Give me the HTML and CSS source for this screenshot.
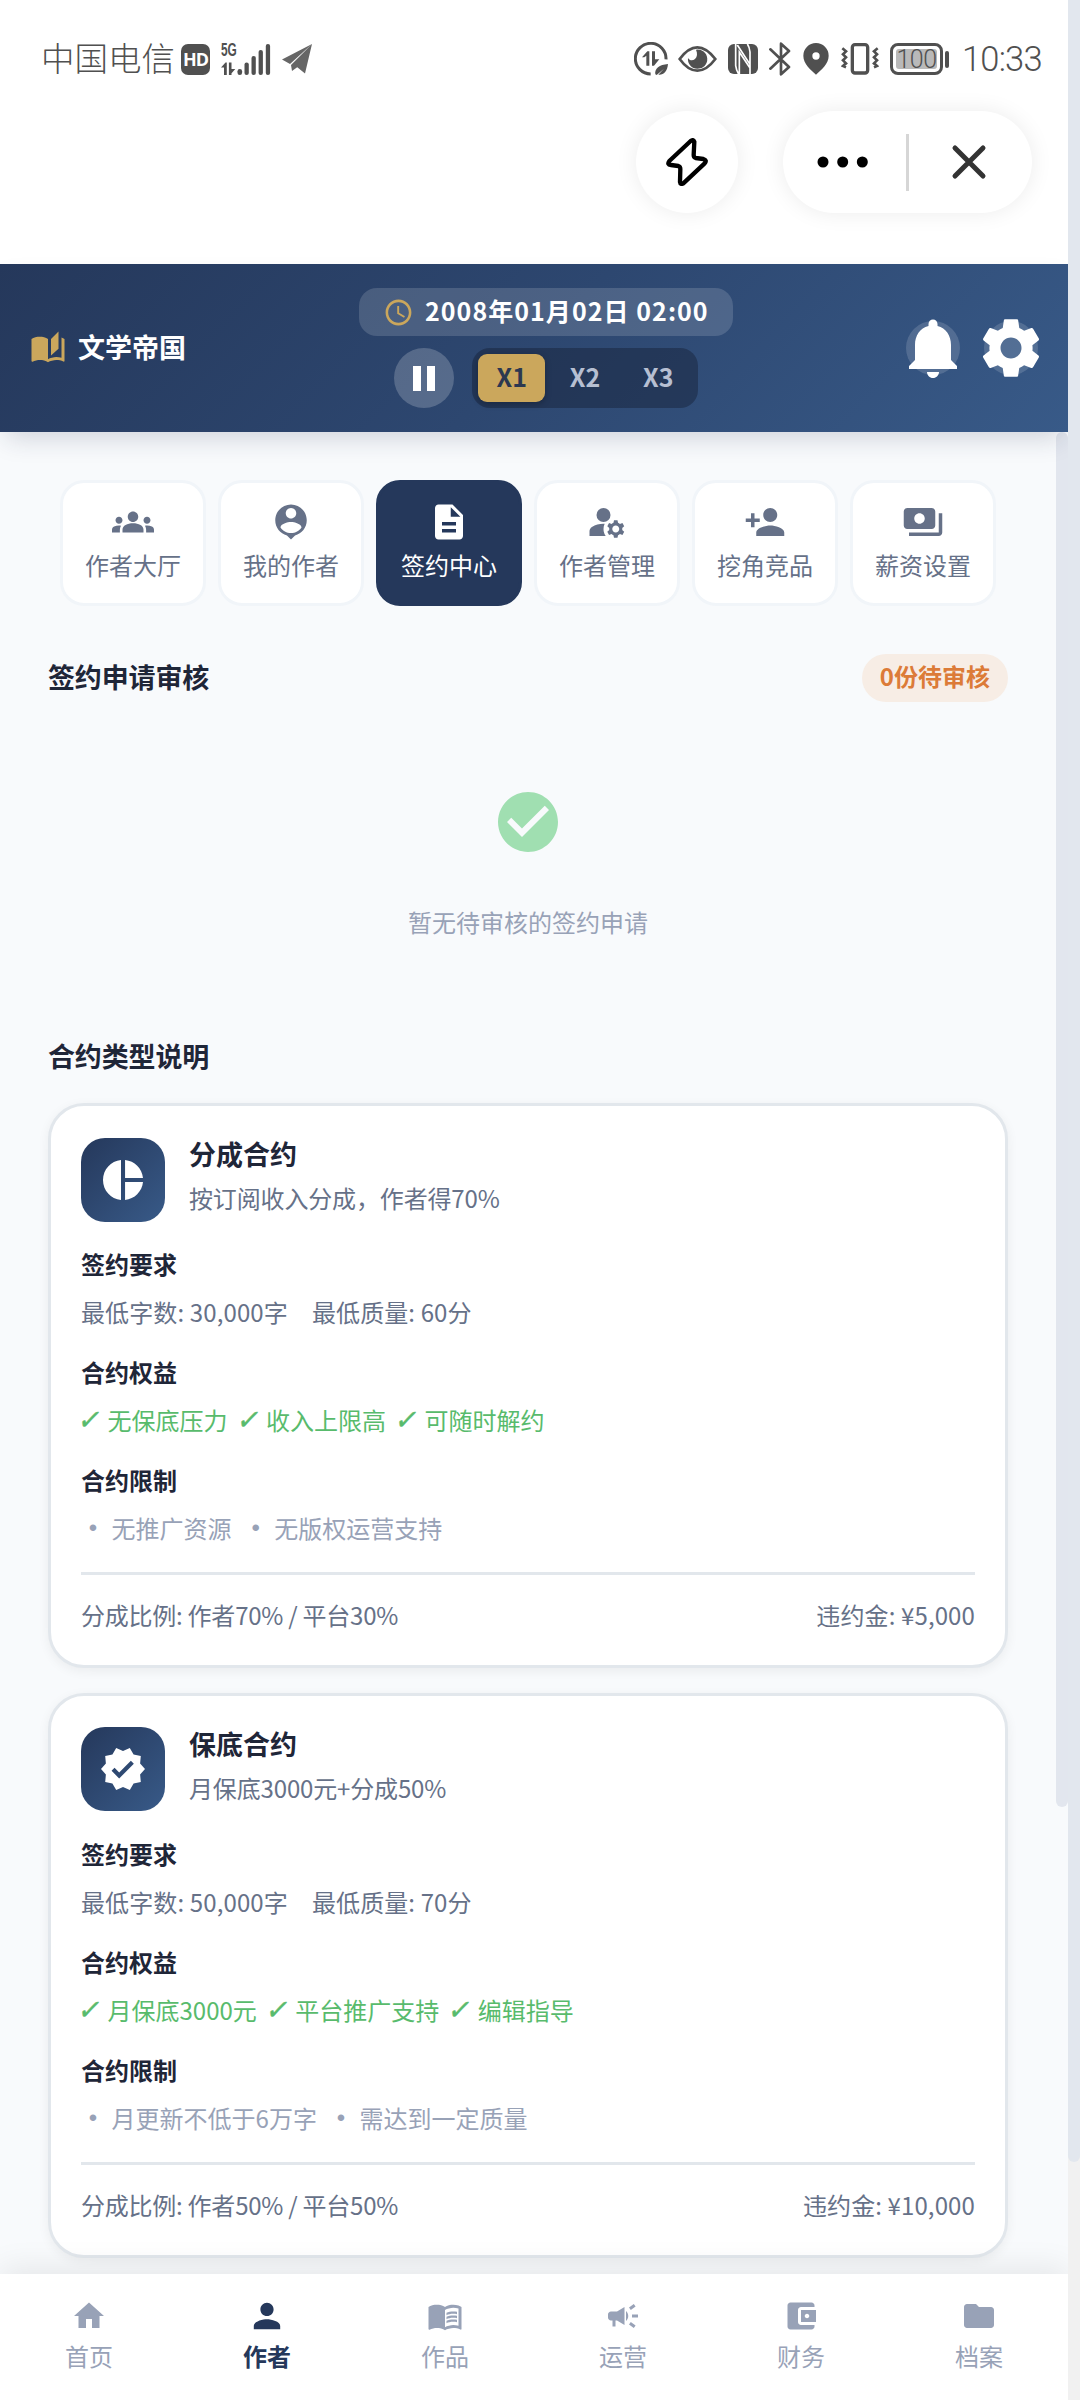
FILE: index.html
```html
<!DOCTYPE html>
<html lang="zh-CN">
<head>
<meta charset="utf-8">
<title>文学帝国</title>
<link rel="stylesheet" href="styles.css">
</head>
<body>
<div class="screen">
  <div class="app">
    <div class="status">
      <span class="carrier">中国电信</span>
      <span class="hd">HD</span>
      <span class="signal">
        <span class="net">5G</span>
        <svg width="50" height="34" viewBox="0 0 50 34"><path d="M0 25.500l4.500-5h1.300v12.500h-2.800v-7.500zM10.500 20.500v12.500h-2.600v-12.500zM9.500 27h4.800l-4.800 5.500z"/><rect x="16.500" y="27" width="4.600" height="6" rx="2.300"/><rect x="23.500" y="20.500" width="4.300" height="12.500" rx="2.100"/><rect x="30.500" y="14" width="4.300" height="19" rx="2.100"/><rect x="37.600" y="8" width="4.300" height="25" rx="2.100"/><rect x="44.800" y="2" width="4.300" height="31" rx="2.100"/></svg>
      </span>
      <svg class="plane" width="30" height="30" viewBox="0 0 30 30"><path fill="#666" d="M30 0L0 15.500l8 4.500zM30 0L9 21l1 6 5.500-4zM30 0L12.500 21l10.500 8.500z"/></svg>
      <span class="spacer"></span>
      <svg class="s-data" width="34" height="34" viewBox="0 0 102 102"><path fill="none" stroke="#505050" stroke-width="9" d="M50 96A46 46 0 1 1 96 52"/><path d="M24 46l16-18h6v43h-9V41l-6 5zM54 28h9v24h13L60 71h-6zM64 97c-3-17 12-29 38-31-2 23-14 34-29 32l17-18-22 19z"/></svg>
      <svg class="s-eye" width="39" height="26" viewBox="0 0 117 78"><path fill="none" stroke="#505050" stroke-width="8" d="M5 39Q31 4 58 4T112 39Q86 74 58 74T5 39z"/><path d="M54 11a29 29 0 1 1-24 25c5 8 14 9 21 3 7-6 8-17 3-28z"/></svg>
      <svg class="s-nfc" width="30" height="30" viewBox="0 0 90 90"><rect width="90" height="90" rx="18"/><path fill="none" stroke="#fff" stroke-width="5" d="M23 0v65q2 15 9 25M34 90V24l32 48V24M66 90V24Q64 8 58 0M28 3l38 58"/></svg>
      <svg class="s-bt" width="22" height="34" viewBox="0 0 66 102"><path fill="none" stroke="#505050" stroke-width="8" stroke-linejoin="round" stroke-linecap="round" d="M4 22l56 53-24 22V5l24 22L4 80"/></svg>
      <svg class="s-pin" width="26" height="32" viewBox="0 0 78 96"><path fill-rule="evenodd" d="M39 0a38 38 0 0 1 38 38c0 24-22 42-38 57C23 80 1 62 1 38A38 38 0 0 1 39 0zm0 28a11 11 0 1 0 0 22 11 11 0 0 0 0-22z"/></svg>
      <svg class="s-vib" width="38" height="32" viewBox="0 0 114 96"><g fill="none" stroke="#505050"><rect x="34" y="5" width="46" height="85" rx="8" stroke-width="10"/><path stroke-width="8" d="M4 16l11 9-9 9 9 9-9 9 9 9-9 8 9 4M110 16l-11 9 9 9-9 9 9 9-9 9 9 8-9 4"/></g></svg>
      <span class="battery"><span class="level">100</span></span><span class="battery-tip"></span>
      <span class="time">10:33</span>
    </div>

    <div class="capsules">
      <span class="round"><svg width="42" height="48" viewBox="0 0 126 144"><path fill="none" stroke="#000" stroke-width="13" stroke-linejoin="round" d="M74 9L10 69q-8 11 5 12l22 3q6 2 6 9l-1 39q1 9 10 4l64-60q8-9-4-13l-23-3q-6-2-6-9l2-40q-3-8-11-2z"/></svg></span>
      <span class="pill">
        <svg class="dots" width="52" height="12" viewBox="0 0 52 12"><circle cx="6" cy="6" r="5.500"/><circle cx="25.700" cy="6" r="5.500"/><circle cx="45.300" cy="6" r="5.500"/></svg>
        <span class="rule"></span>
        <svg class="close" width="36" height="36" viewBox="0 0 36 36"><path stroke="#333" stroke-width="5" stroke-linecap="round" d="M4 4l28 28M32 4L4 32"/></svg>
      </span>
    </div>

    <header class="header">
      <div class="brand">
        <svg width="36" height="36" viewBox="0 0 24 24"><path d="M19 1l-5 5v11l5-4.500V1zM1 6v14.650c0 .25.25.5.5.5.1 0 .15-.05.25-.05C3.100 20.450 5.050 20 6.500 20c1.950 0 4.050.4 5.500 1.500V6c-1.450-1.100-3.550-1.500-5.500-1.500S2.450 4.900 1 6zm22 13.500V6c-.6-.45-1.250-.75-2-1v13.500c-1.100-.35-2.300-.5-3.500-.5-1.700 0-4.150.65-5.500 1.500v2c1.350-.85 3.800-1.500 5.500-1.500 1.650 0 3.350.3 4.750 1.050.1.05.15.05.25.05.25 0 .5-.25.5-.5v-1.100z"/></svg>
        <span>文学帝国</span>
      </div>
      <div class="clock">
        <div class="date">
          <svg width="31" height="31" viewBox="0 0 24 24"><path d="M11.990 2C6.470 2 2 6.480 2 12s4.470 10 9.990 10C17.520 22 22 17.520 22 12S17.520 2 11.990 2zM12 20c-4.420 0-8-3.580-8-8s3.580-8 8-8 8 3.580 8 8-3.580 8-8 8zm.5-13H11v6l5.250 3.150.75-1.230-4.500-2.670z"/></svg>
          <span>2008年01月02日 02:00</span>
        </div>
        <div class="controls">
          <span class="pause"><i></i><i></i></span>
          <div class="speeds"><span class="on">X1</span><span>X2</span><span>X3</span></div>
        </div>
      </div>
      <div class="actions">
        <span><svg viewBox="0 0 24 24"><path d="M12 22c1.100 0 2-.9 2-2h-4c0 1.100.89 2 2 2zm6-6v-5c0-3.070-1.640-5.640-4.500-6.320V4c0-.83-.67-1.500-1.500-1.500s-1.500.67-1.500 1.500v.68C7.630 5.360 6 7.920 6 11v5l-2 2v1h16v-1l-2-2z"/></svg></span>
        <span><svg viewBox="0 0 24 24"><path d="M19.140 12.940c.04-.3.06-.61.06-.94 0-.32-.02-.64-.07-.94l2.030-1.580c.18-.14.23-.41.12-.61l-1.920-3.320c-.12-.22-.37-.29-.59-.22l-2.390.96c-.5-.38-1.030-.7-1.620-.94l-.36-2.540c-.04-.24-.24-.41-.48-.41h-3.840c-.24 0-.43.17-.47.41l-.36 2.540c-.59.24-1.130.57-1.620.94l-2.390-.96c-.22-.08-.47 0-.59.22L2.740 8.870c-.12.21-.08.47.12.61l2.030 1.580c-.05.3-.09.63-.09.94s.02.64.07.94l-2.030 1.580c-.18.14-.23.41-.12.61l1.920 3.320c.12.22.37.29.59.22l2.390-.96c.5.38 1.030.7 1.620.94l.36 2.540c.05.24.24.41.48.41h3.840c.24 0 .44-.17.47-.41l.36-2.540c.59-.24 1.130-.56 1.620-.94l2.390.96c.22.08.47 0 .59-.22l1.920-3.320c.12-.22.07-.47-.12-.61l-2.010-1.580zM12 15.500c-1.930 0-3.500-1.570-3.500-3.500s1.570-3.500 3.500-3.500 3.500 1.570 3.500 3.500-1.570 3.500-3.500 3.500z"/></svg></span>
      </div>
    </header>

    <div class="viewport">
      <main class="content">
        <nav class="tabs">
          <div class="tab"><svg viewBox="0 0 24 24"><path d="M12 12.750c1.630 0 3.070.39 4.240.9 1.080.48 1.760 1.560 1.760 2.730V18H6v-1.610c0-1.180.68-2.260 1.760-2.730 1.170-.52 2.610-.91 4.240-.91zM4 13c1.100 0 2-.9 2-2s-.9-2-2-2-2 .9-2 2 .9 2 2 2zm1.130 1.100c-.37-.06-.74-.1-1.130-.1-.99 0-1.930.21-2.780.58C.48 14.900 0 15.620 0 16.430V18h4.500v-1.610c0-.83.23-1.610.63-2.290zM20 13c1.100 0 2-.9 2-2s-.9-2-2-2-2 .9-2 2 .9 2 2 2zm4 3.430c0-.81-.48-1.530-1.220-1.850-.85-.37-1.790-.58-2.780-.58-.39 0-.76.04-1.130.1.4.68.63 1.460.63 2.290V18H24v-1.570zM12 6c1.660 0 3 1.340 3 3s-1.340 3-3 3-3-1.340-3-3 1.340-3 3-3z"/></svg><span>作者大厅</span></div>
          <div class="tab"><svg viewBox="0 0 24 24"><path d="M12 2c-4.970 0-9 4.030-9 9 0 4.170 2.840 7.670 6.690 8.690L12 22l2.310-2.310C18.160 18.670 21 15.170 21 11c0-4.970-4.030-9-9-9zm0 2c1.660 0 3 1.340 3 3s-1.340 3-3 3-3-1.340-3-3 1.340-3 3-3zm0 14.300c-2.500 0-4.710-1.280-6-3.220.03-1.990 4-3.080 6-3.080 1.990 0 5.970 1.090 6 3.080-1.290 1.940-3.500 3.220-6 3.220z"/></svg><span>我的作者</span></div>
          <div class="tab active"><svg viewBox="0 0 24 24"><path d="M14 2H6c-1.100 0-1.990.9-1.990 2L4 20c0 1.100.89 2 1.990 2H18c1.100 0 2-.9 2-2V8l-6-6zm2 16H8v-2h8v2zm0-4H8v-2h8v2zm-3-5V3.500L18.500 9H13z"/></svg><span>签约中心</span></div>
          <div class="tab"><svg viewBox="0 0 24 24"><circle cx="10" cy="8" r="4"/><path d="M10.670 13.020C10.450 13.010 10.230 13 10 13c-2.420 0-4.680.67-6.610 1.820-.88.52-1.390 1.500-1.390 2.530V20h9.260c-.79-1.130-1.260-2.510-1.260-4 0-1.070.25-2.070.67-2.980zM20.750 16c0-.22-.03-.42-.06-.63l1.140-1.010-1-1.730-1.450.49c-.32-.27-.68-.48-1.080-.63L18 11h-2l-.3 1.490c-.4.15-.76.36-1.080.63l-1.450-.49-1 1.730 1.140 1.010c-.03.21-.06.41-.06.63s.03.42.06.63l-1.140 1.010 1 1.730 1.450-.49c.32.27.68.48 1.080.63L16 21h2l.3-1.490c.4-.15.76-.36 1.080-.63l1.450.49 1-1.730-1.140-1.010c.03-.21.06-.41.06-.63zM17 18c-1.100 0-2-.9-2-2s.9-2 2-2 2 .9 2 2-.9 2-2 2z"/></svg><span>作者管理</span></div>
          <div class="tab"><svg viewBox="0 0 24 24"><path d="M15 12c2.210 0 4-1.790 4-4s-1.790-4-4-4-4 1.790-4 4 1.790 4 4 4zm-9-2V7H4v3H1v2h3v3h2v-3h3v-2H6zm9 4c-2.670 0-8 1.340-8 4v2h16v-2c0-2.660-5.330-4-8-4z"/></svg><span>挖角竞品</span></div>
          <div class="tab"><svg viewBox="0 0 24 24"><path d="M19 14V6c0-1.100-.9-2-2-2H3c-1.100 0-2 .9-2 2v8c0 1.100.9 2 2 2h14c1.100 0 2-.9 2-2zm-9-1c-1.660 0-3-1.340-3-3s1.340-3 3-3 3 1.340 3 3-1.340 3-3 3zm13-6v11c0 1.100-.9 2-2 2H4v-2h17V7h2z"/></svg><span>薪资设置</span></div>
        </nav>

        <div class="section-head"><h2>签约申请审核</h2><span class="badge">0份待审核</span></div>

        <div class="empty">
          <svg width="72" height="72" viewBox="0 0 24 24"><path d="M12 2C6.480 2 2 6.480 2 12s4.480 10 10 10 10-4.480 10-10S17.520 2 12 2zm-2 15l-5-5 1.410-1.410L10 14.170l7.590-7.590L19 8l-9 9z"/></svg>
          <p>暂无待审核的签约申请</p>
        </div>

        <h2 class="types-title">合约类型说明</h2>

        <div class="cards">
          <article class="card">
            <div class="card-head">
              <span class="card-icon"><svg width="48" height="48" viewBox="0 0 24 24"><path d="M11 2v20c-5.070-.5-9-4.790-9-10s3.930-9.500 9-10zm2.030 0v8.990H22c-.47-4.740-4.240-8.520-8.970-8.990zm0 11.010V22c4.740-.47 8.500-4.250 8.970-8.990h-8.970z"/></svg></span>
              <div><h3>分成合约</h3><p>按订阅收入分成，作者得70%</p></div>
            </div>
            <section><h4>签约要求</h4><p class="reqs"><span>最低字数: 30,000字</span><span>最低质量: 60分</span></p></section>
            <section><h4>合约权益</h4><p class="perks"><span><b>✓</b>无保底压力</span><span><b>✓</b>收入上限高</span><span><b>✓</b>可随时解约</span></p></section>
            <section><h4>合约限制</h4><p class="limits"><span><b>•</b>无推广资源</span><span><b>•</b>无版权运营支持</span></p></section>
            <div class="card-foot"><span>分成比例: 作者70% / 平台30%</span><span>违约金: ¥5,000</span></div>
          </article>
          <article class="card">
            <div class="card-head">
              <span class="card-icon"><svg width="48" height="48" viewBox="0 0 24 24"><path d="M23 12l-2.440-2.790.34-3.690-3.610-.82-1.890-3.200L12 2.960 8.600 1.500 6.710 4.690 3.100 5.500l.34 3.700L1 12l2.440 2.790-.34 3.700 3.610.82L8.600 22.500l3.400-1.470 3.400 1.460 1.890-3.190 3.610-.82-.34-3.690L23 12zm-12.910 4.720l-3.800-3.810 1.480-1.480 2.320 2.330 5.850-5.870 1.480 1.480-7.330 7.350z"/></svg></span>
              <div><h3>保底合约</h3><p>月保底3000元+分成50%</p></div>
            </div>
            <section><h4>签约要求</h4><p class="reqs"><span>最低字数: 50,000字</span><span>最低质量: 70分</span></p></section>
            <section><h4>合约权益</h4><p class="perks"><span><b>✓</b>月保底3000元</span><span><b>✓</b>平台推广支持</span><span><b>✓</b>编辑指导</span></p></section>
            <section><h4>合约限制</h4><p class="limits"><span><b>•</b>月更新不低于6万字</span><span><b>•</b>需达到一定质量</span></p></section>
            <div class="card-foot"><span>分成比例: 作者50% / 平台50%</span><span>违约金: ¥10,000</span></div>
          </article>
        </div>
      </main>
      <div class="inner-bar"><div class="thumb"></div></div>
    </div>

    <nav class="bottom">
      <div class="item"><svg viewBox="0 0 24 24"><path d="M10 20v-6h4v6h5v-8h3L12 3 2 12h3v8z"/></svg><span>首页</span></div>
      <div class="item active"><svg viewBox="0 0 24 24"><path d="M12 12c2.210 0 4-1.790 4-4s-1.790-4-4-4-4 1.790-4 4 1.790 4 4 4zm0 2c-2.670 0-8 1.340-8 4v2h16v-2c0-2.660-5.330-4-8-4z"/></svg><span>作者</span></div>
      <div class="item"><svg viewBox="0 0 24 24"><path d="M21 5c-1.110-.35-2.330-.5-3.500-.5-1.950 0-4.050.4-5.500 1.500-1.450-1.100-3.550-1.500-5.500-1.500S2.450 4.900 1 6v14.650c0 .25.25.5.5.5.1 0 .15-.05.25-.05C3.100 20.450 5.050 20 6.500 20c1.950 0 4.050.4 5.500 1.500 1.350-.85 3.800-1.500 5.500-1.500 1.650 0 3.350.3 4.750 1.050.1.05.15.05.25.05.25 0 .5-.25.5-.5V6c-.6-.45-1.250-.75-2-1zm0 13.500c-1.100-.35-2.300-.5-3.500-.5-1.700 0-4.150.65-5.500 1.500V8c1.350-.85 3.800-1.500 5.500-1.500 1.200 0 2.400.15 3.500.5v11.500z"/><path d="M17.500 10.500c.88 0 1.730.09 2.500.26V9.240c-.79-.15-1.640-.24-2.500-.24-1.700 0-3.240.29-4.500.83v1.660c1.130-.64 2.700-.99 4.500-.99zM13 12.490v1.660c1.130-.64 2.700-.99 4.500-.99.88 0 1.730.09 2.500.26V11.900c-.79-.15-1.640-.24-2.500-.24-1.700 0-3.240.3-4.500.83zm4.500 1.840c-1.700 0-3.240.29-4.500.83v1.660c1.130-.64 2.700-.99 4.500-.99.88 0 1.730.09 2.500.26v-1.520c-.79-.16-1.640-.24-2.500-.24z"/></svg><span>作品</span></div>
      <div class="item"><svg viewBox="0 0 24 24"><path d="M18 11v2h4v-2h-4zm-2 6.610c.96.71 2.210 1.650 3.200 2.390.4-.53.8-1.070 1.200-1.600-.99-.74-2.240-1.680-3.200-2.400-.4.54-.8 1.080-1.200 1.610zM20.400 5.600c-.4-.53-.8-1.070-1.200-1.600-.99.74-2.240 1.680-3.200 2.400.4.53.8 1.070 1.200 1.600.96-.72 2.210-1.650 3.200-2.400zM4 9c-1.100 0-2 .9-2 2v2c0 1.100.9 2 2 2h1v4h2v-4h1l5 3V6L8 9H4zm11.500 3c0-1.330-.58-2.530-1.500-3.350v6.690c.92-.81 1.500-2.010 1.500-3.340z"/></svg><span>运营</span></div>
      <div class="item"><svg viewBox="0 0 24 24"><path d="M21 18v1c0 1.100-.9 2-2 2H5c-1.110 0-2-.9-2-2V5c0-1.100.89-2 2-2h14c1.100 0 2 .9 2 2v1h-9c-1.110 0-2 .9-2 2v8c0 1.100.89 2 2 2h9zm-9-2h10V8H12v8zm4-2.500c-.83 0-1.500-.67-1.500-1.500s.67-1.500 1.500-1.500 1.500.67 1.500 1.500-.67 1.500-1.500 1.500z"/></svg><span>财务</span></div>
      <div class="item"><svg viewBox="0 0 24 24"><path d="M10 4H4c-1.100 0-1.990.9-1.990 2L2 18c0 1.100.9 2 2 2h16c1.100 0 2-.9 2-2V8c0-1.100-.9-2-2-2h-8l-2-2z"/></svg><span>档案</span></div>
    </nav>
  </div>
  <div class="outer-bar"><div class="thumb"></div></div>
</div>
</body>
</html>
```
FILE: styles.css
```css
* { box-sizing: border-box; margin: 0; padding: 0; }
body {
  width: 1080px;
  height: 2400px;
  overflow: hidden;
  background: #fff;
  font-family: "Noto Sans CJK SC", sans-serif;
  font-size: 24px;
  line-height: 36px;
  color: #1f2638;
  white-space: nowrap;
}
svg { display: block; flex: none; fill: currentColor; }
.screen { display: flex; height: 2400px; }
.app { width: 1068px; display: flex; flex-direction: column; height: 2400px; }
.outer-bar { width: 12px; background: #f1f1f1; position: relative; z-index: 3; }
.outer-bar .thumb { height: 2162px; background: #e2e7ee; border-radius: 0 0 6px 6px; }

/* system status bar */
.status { display: flex; align-items: center; height: 111px; padding: 7px 25px 0 41px; color: #505050; }
.carrier { font-size: 33.500px; font-weight: 300; line-height: 40px; margin-top: -4px; width: 140px; }
.hd { width: 29px; height: 31px; border-radius: 7px; background: #505050; color: #fff; font: bold 18px/31px "Open Sans", sans-serif; text-align: center; letter-spacing: -1px; }
.signal { position: relative; margin-left: 11px; }
.net { position: absolute; left: 0; top: 0; font: bold 18px/16px "Liberation Sans", sans-serif; transform: scaleX(.66); transform-origin: left; }
.plane { margin-left: 11px; }
.spacer { flex: 1; }
.s-eye { margin-left: 10px; }
.s-nfc { margin-left: 11px; }
.s-bt { margin-left: 11px; }
.s-pin { margin-left: 12px; }
.s-vib { margin-left: 12px; }
.battery { margin-left: 11px; width: 53px; height: 32px; border: 3px solid #505050; border-radius: 8px; padding: 3px; }
.level { display: block; height: 20px; border-radius: 3px; background: #b9b9b9; font: 300 25px/21px Roboto, sans-serif; text-align: center; letter-spacing: -.5px; }
.battery-tip { width: 4px; height: 17px; margin-left: 2px; border-radius: 2px; background: #505050; }
.time { margin-left: 13px; width: 81px; font: 300 34.500px/40px Roboto, sans-serif; letter-spacing: -.8px; }

.capsules { display: flex; gap: 45px; height: 153px; padding-left: 636px; color: #000; }
.round, .pill { height: 102px; background: #fff; border-radius: 51px; box-shadow: 0 0 22px rgba(0, 0, 0, .08); display: flex; align-items: center; }
.round { width: 102px; justify-content: center; }
.pill { width: 249px; padding-left: 34px; }
.rule { width: 3px; height: 57px; background: #d6d6d6; margin: 0 42px 0 37px; }

/* app header */
.header { position: relative; z-index: 2; flex: none; height: 168px; padding: 0 30px; display: grid; grid-template-columns: 1fr auto 1fr; align-items: center; color: #fff; background: linear-gradient(135deg, #25385b, #2d4770 50%, #385a88); box-shadow: 0 12px 24px -6px rgba(30, 41, 70, .18); }
.brand { display: flex; align-items: center; gap: 12px; font-size: 27px; font-weight: 700; }
.brand svg { color: #cba75c; }
.brand span { margin-top: -2px; }
.clock { display: flex; flex-direction: column; align-items: center; gap: 12px; margin-left: 24px; }
.date { width: 374px; height: 48px; border-radius: 18px; background: rgba(255, 255, 255, .15); display: flex; align-items: center; gap: 11px; padding: 0 0 0 24px; font-weight: 700; font-size: 25px; letter-spacing: 1.050px; }
.date svg { color: #cba75c; }
.date span { margin-top: -4px; }
.controls { display: flex; gap: 18px; }
.pause { width: 60px; height: 60px; border-radius: 50%; background: rgba(255, 255, 255, .2); display: flex; align-items: center; justify-content: center; gap: 6px; }
.pause i { width: 8px; height: 25px; background: #fff; }
.speeds { display: flex; gap: 6px; padding: 6px; border-radius: 18px; background: rgba(24, 36, 60, .5); }
.speeds span { width: 67.300px; height: 48px; line-height: 44px; text-align: center; border-radius: 9px; font-weight: 700; font-size: 25px; color: #b6bfd2; }
.speeds .on { background: #cba75c; color: #2c3850; box-shadow: 0 2px 6px rgba(0, 0, 0, .25); }
.actions { display: flex; justify-content: flex-end; gap: 24px; }
.actions span { width: 54px; height: 54px; border-radius: 50%; background: rgba(255, 255, 255, .15); display: flex; align-items: center; justify-content: center; }
.actions svg { width: 72px; height: 72px; }

/* scrolling content */
.viewport { flex: 1; min-height: 0; display: flex; overflow: hidden; background: #f8fafc; }
.content { width: 1056px; padding: 48px; }
.inner-bar { width: 12px; }
.inner-bar .thumb { height: 1375px; border-radius: 6px; background: #e2e6ee; }

.tabs { display: grid; grid-template-columns: repeat(6, 146px); gap: 12px; margin: 0 12px; }
.tab { height: 126px; padding-top: 18px; border: 3px solid #f1f5f9; border-radius: 24px; background: #fff; display: flex; flex-direction: column; align-items: center; gap: 4px; color: #667188; }
.tab svg { width: 42px; height: 42px; }
.tab.active { background: #25385b; border-color: #25385b; color: #fff; }

h2 { font-size: 27px; line-height: 43px; font-weight: 700; letter-spacing: -.15px; }
.section-head { display: flex; justify-content: space-between; align-items: center; height: 48px; margin-top: 48px; }
.section-head h2 { margin-top: -4px; }
.badge { height: 48px; line-height: 44px; padding: 0 18px; border-radius: 24px; background: #f7ede5; color: #dc7b38; font-weight: 700; }
.empty { display: flex; flex-direction: column; align-items: center; gap: 46px; padding: 84px 0 94px; color: #98a2b7; }
.empty svg { color: #a0dfb1; }
.types-title { margin-bottom: 26px; }

.cards { display: flex; flex-direction: column; gap: 24.600px; }
.card { border: 3px solid #e2e7ec; border-radius: 36px; background: #fff; padding: 30px 30px 32px; box-shadow: 0 3px 12px rgba(0, 0, 0, .06); }
.card-head { display: flex; align-items: center; gap: 24px; height: 87px; margin-bottom: 23px; }
.card-icon { width: 84px; height: 84px; border-radius: 24px; color: #fff; background: linear-gradient(135deg, #25385b, #385a88); display: flex; align-items: center; justify-content: center; }
h3 { font-size: 27px; line-height: 44px; margin-top: -8px; }
.card-head p { line-height: 42px; color: #667188; margin-top: 1px; letter-spacing: -.15px; }
section { height: 84px; margin-bottom: 24px; }
h4 { font-size: 24px; line-height: 36px; margin-bottom: 12px; }
.card p b { font-weight: 400; display: inline-block; }
.reqs, .perks, .limits { display: flex; color: #667188; }
.reqs { gap: 24px; letter-spacing: .12px; }
.perks, .limits { gap: 12px; }
.perks { color: #58bb6c; }
.perks b { width: 26.500px; height: 36px; vertical-align: top; font: 27px/35px "DejaVu Sans", sans-serif; transform: skewX(-12deg); -webkit-text-stroke: .5px #58bb6c; text-indent: -2px; }
.limits { color: #98a2b7; }
.limits b { width: 24px; height: 36px; vertical-align: top; text-align: center; margin-right: 6.600px; font: 24px/36px "Liberation Sans", sans-serif; }
.card-foot { display: flex; justify-content: space-between; margin-top: 26px; padding-top: 22px; border-top: 3px solid #e2e7ec; color: #667188; }
.card-foot span:first-child { letter-spacing: -.24px; }
.card-foot span:last-child { letter-spacing: .12px; }
section:nth-of-type(3) { margin-bottom: 0; }

/* bottom navigation */
.bottom { position: relative; z-index: 2; flex: none; height: 126px; display: grid; grid-template-columns: repeat(6, 1fr); background: #fff; box-shadow: 0 -6px 30px rgba(0, 0, 0, .08); }
.item { display: flex; flex-direction: column; align-items: center; padding-top: 24px; gap: 4px; color: #98a2b7; }
.item svg { width: 36px; height: 36px; }
.item.active { color: #25385b; font-weight: 700; }
.item.active svg { transform: scale(1.1); }
```
